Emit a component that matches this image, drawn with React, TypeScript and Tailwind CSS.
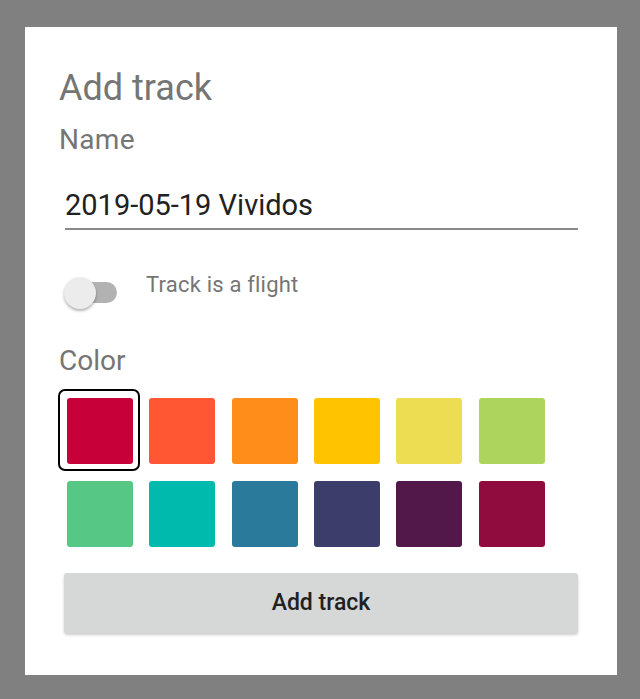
import React, { useState } from 'react';

const colors = [
  '#C70039', '#FF5733', '#FF8D1A', '#FFC300', '#EDDD53', '#ADD45C',
  '#57C785', '#00BAAD', '#2A7B9B', '#3D3D6B', '#511849', '#900C3F',
];

export default function App() {
  const [name, setName] = useState('2019-05-19 Vividos');
  const [flight, setFlight] = useState(false);
  const [selected, setSelected] = useState(0);

  return (
    <div
      className="h-[699px] w-[640px] bg-[#808080] pt-[27px] pl-[25px] pr-[23px] pb-[24px]"
      style={{ fontFamily: 'Roboto, "Noto Sans", sans-serif' }}
    >
      <div className="h-full bg-white pt-[40px]">
        <h1 className="pl-[34px] text-[36px] leading-[42px] text-[#757575]">Add track</h1>
        <div className="mt-[15px] pl-[34px] text-[28px] leading-[32px] tracking-[0.3px] text-[#757575]">Name</div>

        <div className="mt-[32px] ml-[40px] mr-[39px] border-b-2 border-[#8a8a8a] pb-[6px]">
          <input
            value={name}
            onChange={(e) => setName(e.target.value)}
            className="block w-full bg-transparent text-[29px] leading-[34px] text-[#212121] outline-none"
          />
        </div>

        <div className="mt-[42px] flex items-start pl-[38px]">
          <button
            onClick={() => setFlight(!flight)}
            className="relative mt-[3px] h-[33px] w-[54px]"
          >
            <span className="absolute left-[2px] top-[7px] h-[21px] w-[52px] rounded-full bg-[#b2b2b2]" />
            <span className="absolute left-[1px] top-[2px] h-[32px] w-[32px] rounded-full bg-[#ececec] shadow-[0_2px_3px_rgba(0,0,0,0.3)]" />
          </button>
          <span className="ml-[29px] text-[22px] leading-[26px] tracking-[0.2px] text-[#757575]">Track is a flight</span>
        </div>

        <div className="mt-[37px] pl-[34px] text-[28px] leading-[32px] text-[#757575]">Color</div>

        <div className="mt-[12px] ml-[33px] grid w-[494px] grid-cols-6 gap-y-[1px]">
          {colors.map((c, i) => (
            <button
              key={c}
              onClick={() => setSelected(i)}
              className={
                'h-[82px] w-[82px] rounded-[7px] border-2 p-[7px] ' +
                (selected === i ? 'border-black' : 'border-transparent')
              }
            >
              <div className="h-[66px] w-[66px] rounded-[3px]" style={{ backgroundColor: c }} />
            </button>
          ))}
        </div>

        <div className="mt-[19px] ml-[39px] mr-[39px]">
          <button className="h-[60px] w-full rounded-[3px] bg-[#d6d7d7] text-[23px] font-medium text-[#212121] shadow-[0_2px_3px_rgba(0,0,0,0.2)]">
            Add track
          </button>
        </div>
      </div>
    </div>
  );
}
